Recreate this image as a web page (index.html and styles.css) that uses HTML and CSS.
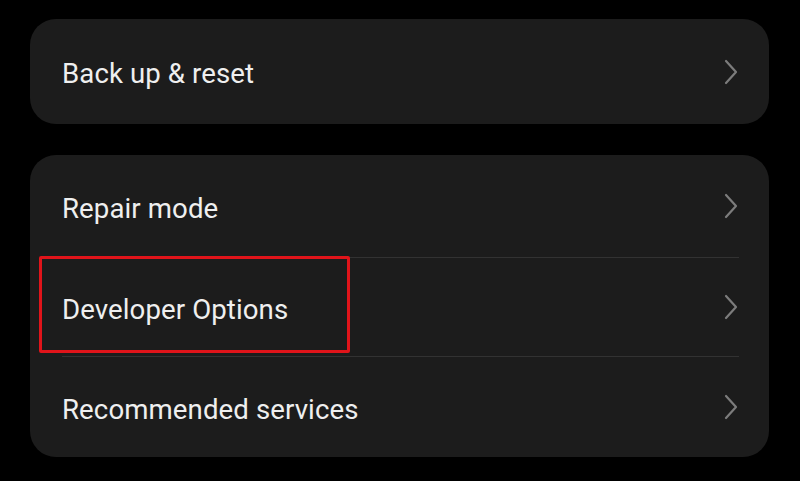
FILE: index.html
```html
<!DOCTYPE html>
<html>
<head>
<meta charset="utf-8">
<link rel="stylesheet" href="styles.css">
</head>
<body>
<div class="screen">
  <div class="card card-single">
    <div class="row">
      <span class="label">Back up &amp; reset</span>
      <svg class="chev" viewBox="0 0 14 26" width="14" height="26"><path d="M2 2 L12 13 L2 24" fill="none" stroke="#7c7c7c" stroke-width="2.2" stroke-linecap="round" stroke-linejoin="round"/></svg>
    </div>
  </div>
  <div class="card">
    <div class="row first">
      <span class="label">Repair mode</span>
      <svg class="chev" viewBox="0 0 14 26" width="14" height="26"><path d="M2 2 L12 13 L2 24" fill="none" stroke="#7c7c7c" stroke-width="2.2" stroke-linecap="round" stroke-linejoin="round"/></svg>
    </div>
    <div class="row divided middle">
      <span class="label">Developer Options</span>
      <span class="highlight"></span>
      <svg class="chev" viewBox="0 0 14 26" width="14" height="26"><path d="M2 2 L12 13 L2 24" fill="none" stroke="#7c7c7c" stroke-width="2.2" stroke-linecap="round" stroke-linejoin="round"/></svg>
    </div>
    <div class="row divided last">
      <span class="label">Recommended services</span>
      <svg class="chev" viewBox="0 0 14 26" width="14" height="26"><path d="M2 2 L12 13 L2 24" fill="none" stroke="#7c7c7c" stroke-width="2.2" stroke-linecap="round" stroke-linejoin="round"/></svg>
    </div>
  </div>
</div>
</body>
</html>
```

FILE: styles.css
```css
* { box-sizing: border-box; }
html, body {
  margin: 0;
  padding: 0;
  background: #000;
  width: 800px;
  height: 481px;
  overflow: hidden;
}
.screen {
  padding: 19px 31px 0 30px;
  display: flex;
  flex-direction: column;
  gap: 31px;
  font-family: Roboto, "Liberation Sans", sans-serif;
}
.card {
  background: #1c1c1c;
  border-radius: 26px;
  padding: 0 30px 0 32px;
}
.card-single .row {
  height: 105px;
}
.row {
  position: relative;
  display: flex;
  align-items: center;
  justify-content: space-between;
}
.row.first { height: 102px; }
.row.middle { height: 99px; }
.row.last { height: 101px; }
.label {
  color: #efefef;
  font-size: 27.6px;
  letter-spacing: 0.1px;
  padding-top: 4px;
}
.row.divided {
  border-top: 1px solid #323232;
}
.chev {
  display: block;
  margin-right: 1px;
}
.highlight {
  position: absolute;
  left: -23px;
  top: -2px;
  width: 311px;
  height: 97px;
  border: 3.5px solid #e0141a;
  border-radius: 2px;
}
```
